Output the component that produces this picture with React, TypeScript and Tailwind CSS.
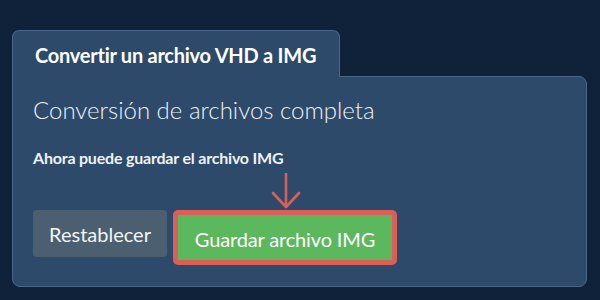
import React from "react";

export default function App() {
  return (
    <div
      className="w-[600px] h-[300px] bg-[#0f2239] pt-[30px] pl-[12px] overflow-hidden"
      style={{ fontFamily: "Lato, 'Noto Sans', sans-serif" }}
    >
      <div className="w-[575px] flex flex-col">
        <div className="relative z-10 -mb-px w-[328px] h-[47px] bg-[#2d4a6b] border border-b-0 border-[#4c6688] rounded-t-[7px] pl-[22px] pt-[12px]">
          <span className="text-[20px] font-bold text-white leading-[24px] tracking-[-0.25px]">
            Convertir un archivo VHD a IMG
          </span>
        </div>
        <div className="relative h-[211px] bg-[#2d4a6b] border border-[#4c6688] rounded-tr-[8px] rounded-b-[8px] px-5 pt-[18px]">
          <h2 className="text-[24px] font-light text-[#eef1f5] leading-[29px]">
            Conversión de archivos completa
          </h2>
          <p className="mt-[24px] text-[16px] font-bold text-[#eef1f5] leading-[19px] tracking-[-0.2px]">
            Ahora puede guardar el archivo IMG
          </p>
          <div className="mt-[43px] flex items-start gap-[6px]">
            <button className="h-[47px] w-[134px] rounded-[4px] bg-[#4c5f71] text-[20px] text-[#f2f4f6] leading-none">
              Restablecer
            </button>
            <div className="relative">
              <svg
                className="absolute left-[98px] -top-[38px]"
                width="30"
                height="38"
                viewBox="0 0 30 38"
                fill="none"
              >
                <path d="M15 1 V35" stroke="#d9605a" strokeWidth="2.6" />
                <path d="M2 21 L15 35 L28 21" stroke="#d9605a" strokeWidth="2.6" strokeLinecap="round" strokeLinejoin="round" />
              </svg>
              <button className="h-[55px] w-[224px] rounded-[5px] border-[5px] border-[#db5f59] bg-[#5cb85c] text-[20px] text-white leading-none pt-[3px] tracking-[-0.15px]">
                Guardar archivo IMG
              </button>
            </div>
          </div>
        </div>
      </div>
    </div>
  );
}
